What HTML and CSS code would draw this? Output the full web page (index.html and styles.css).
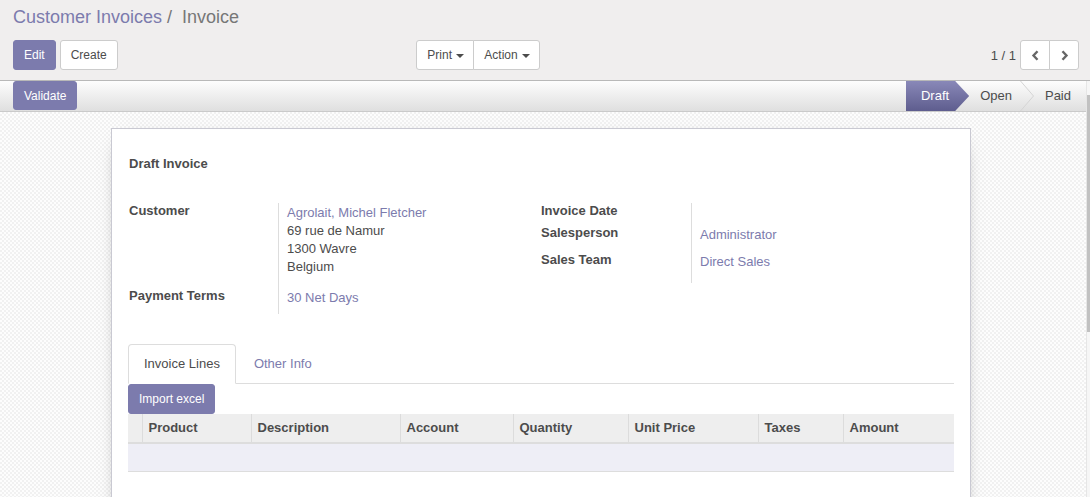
FILE: index.html
```html
<!DOCTYPE html>
<html>
<head>
<meta charset="utf-8">
<link rel="stylesheet" href="styles.css">
</head>
<body>
<header class="cp">
  <ol class="crumbs">
    <li><a class="crumb-link">Customer Invoices</a></li>
    <li class="sep">/&nbsp;</li>
    <li class="cur">Invoice</li>
  </ol>
  <div class="cp-row">
    <div class="cp-left">
      <div class="btns">
        <button class="btn btn-primary">Edit</button>
        <button class="btn">Create</button>
      </div>
      <div class="btn-group">
        <button class="btn btn-dd">Print <span class="caret"></span></button>
        <button class="btn btn-dd">Action <span class="caret"></span></button>
      </div>
    </div>
    <div class="cp-right">
      <span class="pager-val">1 / 1</span>
      <div class="btn-group">
        <button class="btn pager-btn"><svg width="9" height="11" viewBox="0 0 9 11"><polyline points="6.5,1.2 2.5,5.5 6.5,9.8" fill="none" stroke="#666" stroke-width="2.4"/></svg></button>
        <button class="btn pager-btn"><svg width="9" height="11" viewBox="0 0 9 11"><polyline points="2.5,1.2 6.5,5.5 2.5,9.8" fill="none" stroke="#666" stroke-width="2.4"/></svg></button>
      </div>
    </div>
  </div>
</header>
<div class="main">
  <div class="scroller">
    <div class="statusbar">
      <button class="btn btn-primary btn-validate">Validate</button>
      <div class="status">
        <span class="st st-active">Draft</span>
        <span class="st st-open">Open</span>
        <svg class="st-sep" width="14" height="30" viewBox="0 0 14 30"><polyline points="0.5,0 13.5,15 0.5,30" fill="none" stroke="#d4d4d4" stroke-width="1"/></svg>
        <span class="st st-paid">Paid</span>
      </div>
    </div>
    <div class="content">
      <div class="sheet">
        <div class="title">Draft Invoice</div>
        <div class="groups">
          <div class="group">
            <div class="lbl">Customer</div>
            <div class="val pb12">
              <a class="link">Agrolait, Michel Fletcher</a><br>
              69 rue de Namur<br>
              1300 Wavre<br>
              Belgium
            </div>
            <div class="lbl">Payment Terms</div>
            <div class="val pb7"><a class="link">30 Net Days</a></div>
          </div>
          <div class="group">
            <div class="lbl">Invoice Date</div>
            <div class="val val-empty"></div>
            <div class="lbl">Salesperson</div>
            <div class="val pb8"><a class="link">Administrator</a></div>
            <div class="lbl">Sales Team</div>
            <div class="val pb12"><a class="link">Direct Sales</a></div>
          </div>
        </div>
        <ul class="tabs">
          <li class="tab active">Invoice Lines</li>
          <li class="tab">Other Info</li>
        </ul>
        <button class="btn btn-primary btn-import">Import excel</button>
        <table class="lines">
          <colgroup>
            <col class="c-handle"><col class="c-product"><col class="c-desc"><col class="c-account"><col class="c-qty"><col class="c-price"><col class="c-taxes"><col class="c-amount">
          </colgroup>
          <thead>
            <tr><th></th><th>Product</th><th>Description</th><th>Account</th><th>Quantity</th><th>Unit Price</th><th>Taxes</th><th>Amount</th></tr>
          </thead>
          <tbody>
            <tr class="empty-row"><td colspan="8"></td></tr>
          </tbody>
        </table>
      </div>
    </div>
  </div>
  <div class="track"><div class="thumb"></div></div>
</div>
</body>
</html>
```
FILE: styles.css
```css
* { box-sizing: border-box; }
html, body { margin: 0; height: 497px; overflow: hidden; }
body {
  font-family: "Liberation Sans", Arial, sans-serif;
  font-size: 13px;
  color: #4c4c4c;
  background: #fff;
  display: flex;
  flex-direction: column;
}

/* control panel */
.cp {
  background: #f0eeee;
  border-bottom: 1px solid #b8b8b8;
  padding: 4px 11px 10px 13px;
}
.crumbs {
  display: flex;
  margin: 0;
  padding: 0;
  list-style: none;
  font-size: 18px;
  line-height: 26px;
  height: 26px;
}
.crumb-link { color: #7c7bad; }
.sep { color: #777; padding: 0 5px; }
.cur { color: #777; }
.cp-row { display: flex; margin-top: 10px; height: 30px; }
.cp-left { flex: 1 1 0; display: flex; justify-content: space-between; padding-right: 12px; }
.cp-right { flex: 1 1 0; display: flex; justify-content: flex-end; align-items: center; }
.btns { display: flex; gap: 4px; }
.btn {
  height: 30px;
  padding: 0 10px;
  font-family: inherit;
  font-size: 12px;
  line-height: 28px;
  border: 1px solid #ccc;
  border-radius: 3px;
  background: #fff;
  color: #4c4c4c;
  cursor: pointer;
}
.btn-primary { background: #7c7bad; border-color: #7c7bad; color: #fff; }
.btn-dd { padding: 0 9px 0 10px; }
.btn-group { display: flex; }
.btn-group .btn { border-radius: 0; }
.btn-group .btn:first-child { border-radius: 3px 0 0 3px; }
.btn-group .btn:last-child { border-radius: 0 3px 3px 0; margin-left: -1px; }
.caret {
  display: inline-block;
  width: 0; height: 0;
  margin-left: 1px;
  vertical-align: middle;
  border-top: 4px solid #4c4c4c;
  border-left: 4px solid transparent;
  border-right: 4px solid transparent;
}
.pager-val { font-size: 13px; margin-right: 4px; color: #4c4c4c; }
.pager-btn { width: 30px; padding: 0; display: flex; align-items: center; justify-content: center; }

/* main area */
.main { flex: 1; display: flex; min-height: 0; }
.scroller { flex: 1; display: flex; flex-direction: column; min-width: 0; }
.track { width: 4px; background: #f6f6f6; border-left: 1px solid #e6e6e6; }
.thumb { margin-top: 14px; height: 237px; width: 3px; background: #c1c1c1; }

.statusbar {
  height: 31px;
  flex: none;
  display: flex;
  justify-content: space-between;
  padding-left: 13px;
  padding-right: 3px;
  border-bottom: 1px solid #cacaca;
  background: linear-gradient(#fdfdfd, #dfdfdf);
}
.btn-validate { height: 29px; font-size: 12px; padding: 0 10px; }
.status { display: flex; align-items: stretch; }
.st { line-height: 30px; font-size: 13px; color: #4c4c4c; }
.st-active {
  color: #fff;
  padding: 0 20px 0 15px;
  background: linear-gradient(#8988b8, #5e5d8e);
  clip-path: polygon(0 0, calc(100% - 14px) 0, 100% 50%, calc(100% - 14px) 100%, 0 100%);
}
.st-open { padding: 0 8px 0 11px; }
.st-sep { display: block; }
.st-paid { padding: 0 12px 0 11px; }

.content {
  flex: 1;
  padding: 16px 4px 0 0;
  background-color: #f8f8f8;
  background-image: repeating-conic-gradient(#f1f1f1 0 25%, #fdfdfd 0 50%);
  background-size: 4px 4px;
}
.sheet {
  width: 860px;
  margin: 0 auto;
  min-height: 500px;
  background: #fff;
  border: 1px solid #c9c9d2;
  box-shadow: 0 5px 20px -15px #000;
  padding: 26px 16px 40px;
}
.title { font-weight: bold; line-height: 18px; padding-left: 1px; }

.groups { display: grid; grid-template-columns: 1fr 1fr; margin-top: 30px; }
.group { display: grid; grid-template-columns: 151px 1fr; align-content: start; }
.lbl { font-weight: bold; line-height: 16px; border-right: 1px solid #ddd; padding-left: 1px; }
.group + .group .lbl { padding-left: 0; }
.val { padding: 1px 0 0 8px; line-height: 18px; }
.val-empty { height: 22px; }
.pb7 { padding-bottom: 7px; }
.pb8 { padding-bottom: 8px; }
.pb12 { padding-bottom: 12px; }
.link { color: #7c7bad; }

.tabs {
  display: flex;
  list-style: none;
  margin: 30px 0 0;
  padding: 0;
  border-bottom: 1px solid #ddd;
}
.tab {
  padding: 10px 15px;
  line-height: 18px;
  border: 1px solid transparent;
  border-radius: 4px 4px 0 0;
  margin: 0 2px -1px 0;
  color: #7c7bad;
}
.tab.active { border-color: #ddd #ddd transparent; background: #fff; color: #4c4c4c; }

.btn-import { display: block; height: 30px; font-size: 12px; padding: 0 10px; }

.lines { width: 100%; border-collapse: collapse; table-layout: fixed; }
.c-handle { width: 14px; }
.c-product { width: 109px; }
.c-desc { width: 149px; }
.c-account { width: 113px; }
.c-qty { width: 115px; }
.c-price { width: 130px; }
.c-taxes { width: 85px; }
.c-amount { width: 111px; }
.lines th {
  background: #eee;
  text-align: left;
  font-weight: bold;
  line-height: 18px;
  padding: 5px 5px 5px 6px;
  border-bottom: 2px solid #ddd;
  border-left: 1px solid #dcdcdc;
  white-space: nowrap;
}
.lines th:first-child { border-left: none; }
.empty-row td { height: 28px; padding: 0; background: #eeeef6; border-bottom: 1px solid #ddd; }
```
